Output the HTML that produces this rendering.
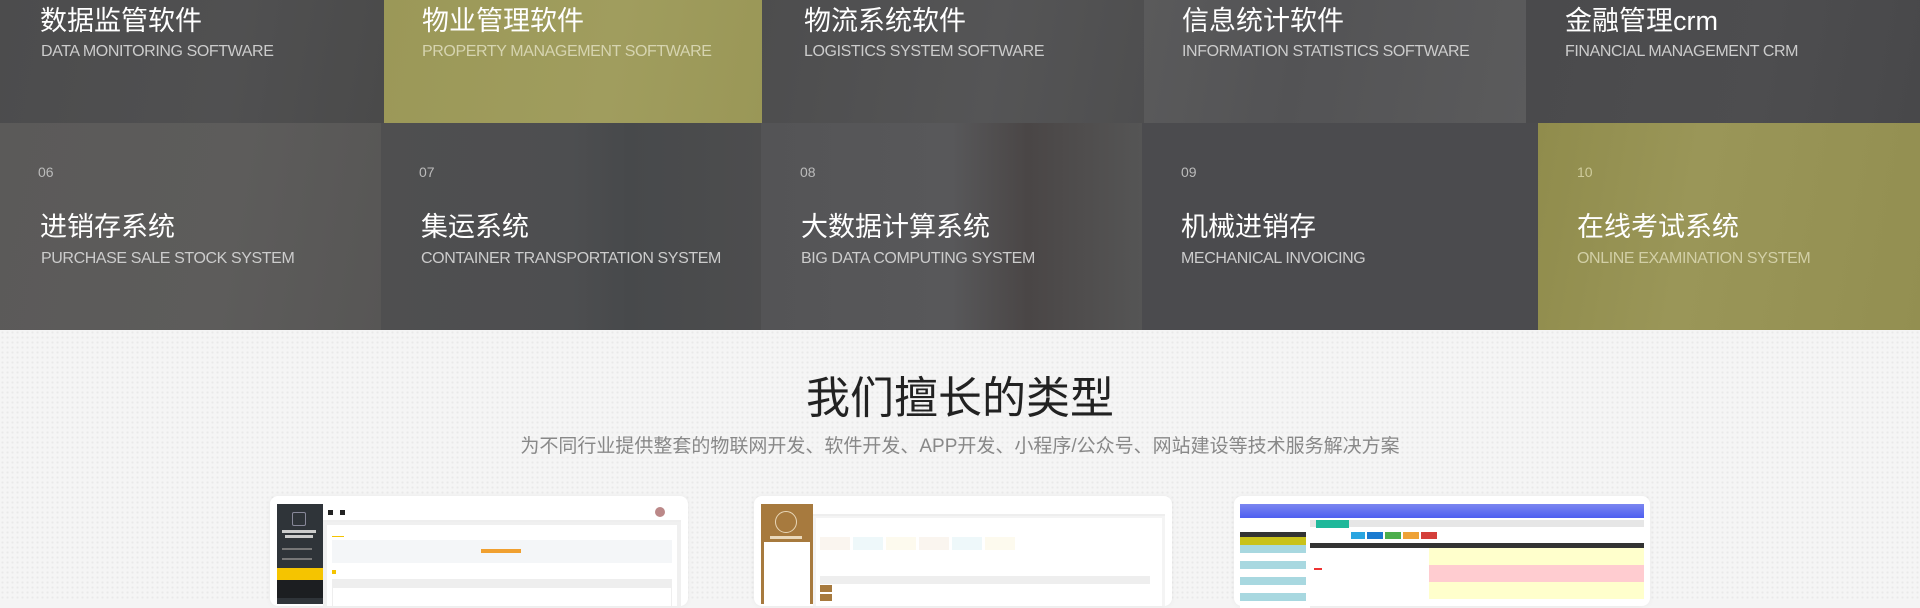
<!DOCTYPE html>
<html><head><meta charset="utf-8"><style>
*{margin:0;padding:0;box-sizing:border-box}
body{width:1920px;height:600px;overflow:hidden;background:#f4f4f4;font-family:"Liberation Sans","Noto Sans CJK SC",sans-serif;position:relative}
.bg{position:absolute;left:0;top:330px;width:1920px;height:270px;background-color:#f5f5f5;background-image:radial-gradient(#e9e9e9 1px,transparent 1.2px);background-size:5px 5px}
.t{position:absolute;overflow:hidden;color:#fff}
.t .n{position:absolute;font-size:14px;color:#bbb;top:163px}
.t .c{position:absolute;font-size:27px;letter-spacing:0px;white-space:nowrap}
.t .e{position:absolute;font-size:16px;color:#ccc;white-space:nowrap;letter-spacing:-0.4px}
.card{position:absolute;top:496px;height:110px;background:#fff;border-radius:8px;box-shadow:0 0 6px rgba(0,0,0,.05)}
.a{position:absolute}
</style></head><body>
<div class="bg"></div>
<div class="t" style="left:0;top:0;width:384px;height:123px;background:linear-gradient(100deg,#4c4c4d,#505051 60%,#4a4a4a)"><div class="c" style="left:40px;top:-1px">数据监管软件</div><div class="e" style="left:41px;top:43px">DATA MONITORING SOFTWARE</div></div>
<div class="t" style="left:384px;top:0;width:378px;height:123px;background:linear-gradient(100deg,#9b9858,#a09d5e 60%,#9a9757)"><div class="c" style="left:38px;top:-1px">物业管理软件</div><div class="e" style="left:38px;top:43px;color:#d6d4b0">PROPERTY MANAGEMENT SOFTWARE</div></div>
<div class="t" style="left:762px;top:0;width:382px;height:123px;background:linear-gradient(100deg,#4d4d4e,#555556 60%,#4e4e4f)"><div class="c" style="left:42px;top:-1px">物流系统软件</div><div class="e" style="left:42px;top:43px">LOGISTICS SYSTEM SOFTWARE</div></div>
<div class="t" style="left:1144px;top:0;width:382px;height:123px;background:linear-gradient(100deg,#5a5a5b,#535355 40%,#5b5b5c)"><div class="c" style="left:38px;top:-1px">信息统计软件</div><div class="e" style="left:38px;top:43px">INFORMATION STATISTICS SOFTWARE</div></div>
<div class="t" style="left:1526px;top:0;width:394px;height:123px;background:linear-gradient(100deg,#4a4a4c,#4d4d4f 60%,#48484a)"><div class="c" style="left:39px;top:-1px">金融管理crm</div><div class="e" style="left:39px;top:43px">FINANCIAL MANAGEMENT CRM</div></div>
<div class="t" style="left:0;top:123px;width:381px;height:207px;background:linear-gradient(100deg,#5b5a59,#5d5c5b 60%,#575655)"><div class="n" style="left:38px;top:41px">06</div><div class="c" style="left:40px;top:82px">进销存系统</div><div class="e" style="left:41px;top:127px">PURCHASE SALE STOCK SYSTEM</div></div>
<div class="t" style="left:381px;top:123px;width:380px;height:207px;background:linear-gradient(90deg,#4f4f50,#4d4e50 50%,#47494b 65%,#4d4d4e)"><div class="n" style="left:38px;top:41px">07</div><div class="c" style="left:40px;top:82px">集运系统</div><div class="e" style="left:40px;top:127px">CONTAINER TRANSPORTATION SYSTEM</div></div>
<div class="t" style="left:761px;top:123px;width:381px;height:207px;background:linear-gradient(90deg,#545456,#58585a 50%,#4a4646 70%,#555555)"><div class="n" style="left:39px;top:41px">08</div><div class="c" style="left:40px;top:82px">大数据计算系统</div><div class="e" style="left:40px;top:127px">BIG DATA COMPUTING SYSTEM</div></div>
<div class="t" style="left:1142px;top:123px;width:396px;height:207px;background:#4b4b4e"><div class="n" style="left:39px;top:41px">09</div><div class="c" style="left:39px;top:82px">机械进销存</div><div class="e" style="left:39px;top:127px">MECHANICAL INVOICING</div></div>
<div class="t" style="left:1538px;top:123px;width:382px;height:207px;background:linear-gradient(100deg,#908c4c,#9a9658 40%,#938f51)"><div class="n" style="left:39px;top:41px;color:#cfcc9c">10</div><div class="c" style="left:39px;top:82px">在线考试系统</div><div class="e" style="left:39px;top:127px;color:#d2cfa6">ONLINE EXAMINATION SYSTEM</div></div>

<div class="a" style="left:0;top:362px;width:1920px;text-align:center;font-size:44px;color:#222">我们擅长的类型</div>
<div class="a" style="left:0;top:431px;width:1920px;text-align:center;font-size:19px;color:#888">为不同行业提供整套的物联网开发、软件开发、APP开发、小程序/公众号、网站建设等技术服务解决方案</div>

<div class="card" style="left:270px;width:418px">
 <div class="a" style="left:7px;top:8px;width:46px;height:100px;background:#2f3439"></div>
 <div class="a" style="left:22px;top:16px;width:14px;height:14px;border:1px solid #889;border-radius:2px"></div>
 <div class="a" style="left:12px;top:34px;width:34px;height:3px;background:#ccc"></div>
 <div class="a" style="left:15px;top:39px;width:28px;height:3px;background:#ccc"></div>
 <div class="a" style="left:12px;top:52px;width:30px;height:2px;background:#777"></div>
 <div class="a" style="left:12px;top:62px;width:30px;height:2px;background:#777"></div>
 <div class="a" style="left:7px;top:72px;width:46px;height:12px;background:#f5c400"></div>
 <div class="a" style="left:7px;top:84px;width:46px;height:18px;background:#1c1e21"></div>
 <div class="a" style="left:53px;top:8px;width:358px;height:18px;background:#fff;border-bottom:2px solid #eee"></div>
 <div class="a" style="left:58px;top:14px;width:5px;height:5px;background:#222"></div>
 <div class="a" style="left:70px;top:14px;width:5px;height:5px;background:#222"></div>
 <div class="a" style="left:385px;top:11px;width:10px;height:10px;border-radius:50%;background:#b88"></div>
 <div class="a" style="left:53px;top:26px;width:358px;height:84px;background:#f0f0f0"></div>
 <div class="a" style="left:57px;top:29px;width:350px;height:81px;background:#fff"></div>
 <div class="a" style="left:62px;top:40px;width:12px;height:1px;background:#f5c400"></div>
 <div class="a" style="left:62px;top:44px;width:340px;height:23px;background:#f4f6f8"></div>
 <div class="a" style="left:211px;top:53px;width:40px;height:4px;background:#f0a030"></div>
 <div class="a" style="left:62px;top:74px;width:4px;height:4px;background:#f5c400"></div>
 <div class="a" style="left:62px;top:83px;width:340px;height:8px;background:#eee"></div>
 <div class="a" style="left:62px;top:91px;width:340px;height:20px;border:1px solid #eee"></div>
</div>
<div class="card" style="left:754px;width:418px">
 <div class="a" style="left:7px;top:8px;width:52px;height:100px;background:#a77a3e"></div>
 <div class="a" style="left:21px;top:15px;width:22px;height:22px;border:1px solid #e8d7b8;border-radius:50%"></div>
 <div class="a" style="left:16px;top:40px;width:32px;height:3px;background:#ead9bb"></div>
 <div class="a" style="left:10px;top:46px;width:46px;height:64px;background:#fff"></div>
 <div class="a" style="left:59px;top:8px;width:352px;height:12px;background:#fff;border-bottom:2px solid #eee"></div>
 <div class="a" style="left:59px;top:20px;width:352px;height:90px;background:#f4f4f4"></div>
 <div class="a" style="left:62px;top:22px;width:346px;height:88px;background:#fff"></div>
 <div class="a" style="left:66px;top:41px;width:30px;height:13px;background:#faf5ef"></div>
 <div class="a" style="left:99px;top:41px;width:30px;height:13px;background:#eef8fa"></div>
 <div class="a" style="left:132px;top:41px;width:30px;height:13px;background:#fdfaee"></div>
 <div class="a" style="left:165px;top:41px;width:30px;height:13px;background:#faf5ef"></div>
 <div class="a" style="left:198px;top:41px;width:30px;height:13px;background:#eef8fa"></div>
 <div class="a" style="left:231px;top:41px;width:30px;height:13px;background:#fdfaee"></div>
 <div class="a" style="left:66px;top:80px;width:330px;height:8px;background:#eee"></div>
 <div class="a" style="left:66px;top:89px;width:12px;height:7px;background:#a77a3e"></div>
 <div class="a" style="left:66px;top:98px;width:12px;height:7px;background:#a77a3e"></div>
</div>
<div class="card" style="left:1234px;width:416px">
 <div class="a" style="left:6px;top:8px;width:404px;height:14px;background:linear-gradient(#7b86f0,#4e5ff0)"></div>
 <div class="a" style="left:6px;top:22px;width:70px;height:90px;background:#fff"></div>
 <div class="a" style="left:6px;top:36px;width:66px;height:5px;background:#333"></div>
 <div class="a" style="left:6px;top:41px;width:66px;height:8px;background:#c9c21a"></div>
 <div class="a" style="left:6px;top:49px;width:66px;height:8px;background:#a8d8e0"></div>
 <div class="a" style="left:6px;top:65px;width:66px;height:8px;background:#a8d8e0"></div>
 <div class="a" style="left:6px;top:81px;width:66px;height:8px;background:#a8d8e0"></div>
 <div class="a" style="left:6px;top:97px;width:66px;height:8px;background:#a8d8e0"></div>
 <div class="a" style="left:76px;top:24px;width:334px;height:7px;background:#e6e6e6"></div>
 <div class="a" style="left:82px;top:24px;width:33px;height:8px;background:#1fb89a"></div>
 <div class="a" style="left:117px;top:36px;width:14px;height:7px;background:#2aa5e0"></div>
 <div class="a" style="left:133px;top:36px;width:16px;height:7px;background:#1a7ad0"></div>
 <div class="a" style="left:151px;top:36px;width:16px;height:7px;background:#4cae4c"></div>
 <div class="a" style="left:169px;top:36px;width:16px;height:7px;background:#eea236"></div>
 <div class="a" style="left:187px;top:36px;width:16px;height:7px;background:#d43f3a"></div>
 <div class="a" style="left:76px;top:47px;width:334px;height:5px;background:#333"></div>
 <div class="a" style="left:195px;top:52px;width:215px;height:17px;background:#ffffcc"></div>
 <div class="a" style="left:195px;top:69px;width:215px;height:17px;background:#ffccd0"></div>
 <div class="a" style="left:195px;top:86px;width:215px;height:17px;background:#ffffcc"></div>
 <div class="a" style="left:80px;top:72px;width:8px;height:2px;background:#e33"></div>
</div>
</body></html>
